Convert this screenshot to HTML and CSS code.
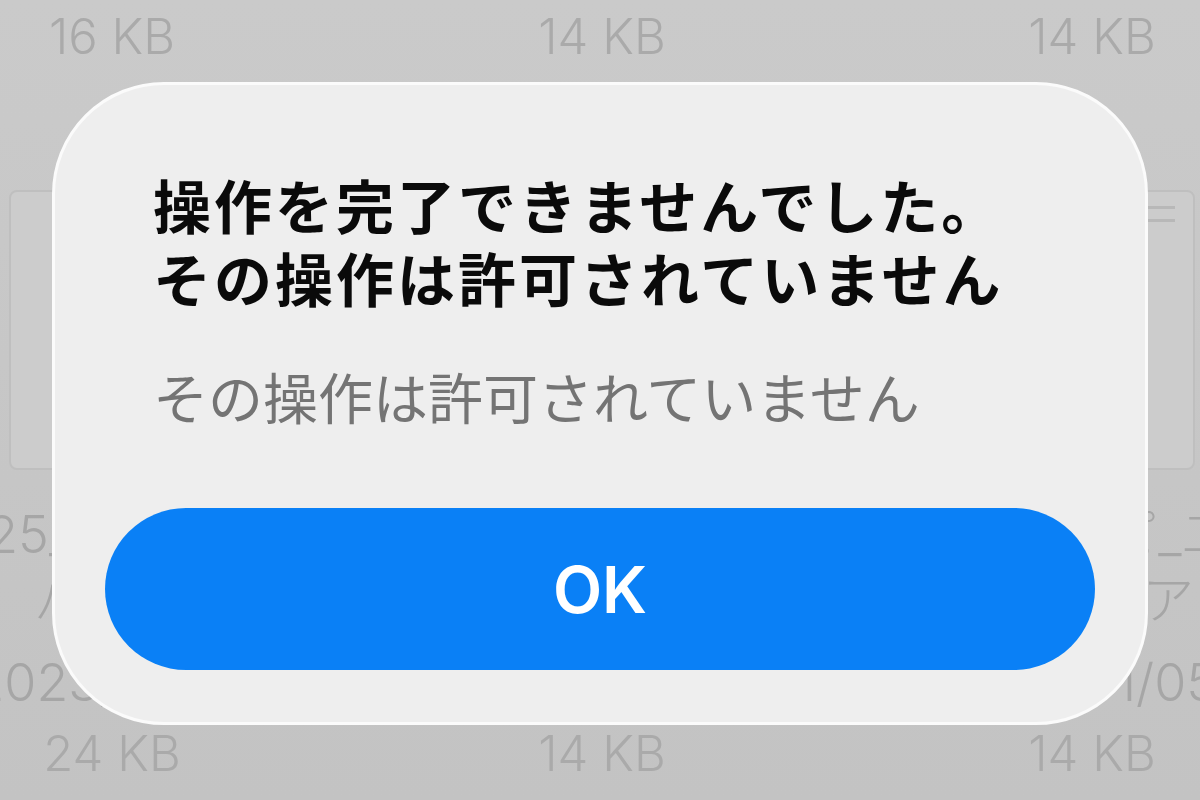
FILE: index.html
```html
<!DOCTYPE html>
<html lang="ja">
<head>
<meta charset="utf-8">
<link rel="stylesheet" href="styles.css">
</head>
<body>
<div class="screen">
  <div class="grid">
    <div class="col">
      <div class="size top">16 KB</div>
      <div class="thumb"><span class="doc-line"></span><span class="doc-line short"></span></div>
      <div class="name">IMG_2025_010512345678</div>
      <div class="name">バック</div>
      <div class="date">2023/05/01</div>
      <div class="size">24 KB</div>
    </div>
    <div class="col">
      <div class="size top">14 KB</div>
      <div class="thumb"><span class="doc-line"></span><span class="doc-line short"></span></div>
      <div class="name">IMG_2025_0105</div>
      <div class="name">スクリーンショット</div>
      <div class="date">2024/01/05</div>
      <div class="size">14 KB</div>
    </div>
    <div class="col">
      <div class="size top">14 KB</div>
      <div class="thumb"><span class="doc-line"></span><span class="doc-line short"></span></div>
      <div class="name">書類コピ_二</div>
      <div class="name">メディア</div>
      <div class="date">2024/01/05&nbsp;&nbsp;</div>
      <div class="size">14 KB</div>
    </div>
  </div>

  <div class="alert">
    <h1 class="title">操作を完了できませんでした。<br>その操作は許可されていません</h1>
    <p class="message">その操作は許可されていません</p>
    <button class="ok">OK</button>
  </div>
</div>
</body>
</html>
```

FILE: styles.css
```css
html, body {
  margin: 0;
  padding: 0;
}

body {
  width: 1200px;
  height: 800px;
  overflow: hidden;
  background: #c7c7c7;
  font-family: "Inter", "Noto Sans CJK JP", sans-serif;
}

.screen {
  position: relative;
  width: 1200px;
  height: 800px;
  overflow: hidden;
  background: linear-gradient(180deg, #cacaca 0%, #c6c6c6 60%, #c3c3c3 100%);
}

.grid {
  display: flex;
  width: 1470px;
  margin-left: -133px;
}

.col {
  flex: 0 0 490px;
  min-width: 0;
  width: 490px;
  display: flex;
  flex-direction: column;
  align-items: center;
}

.size {
  font-family: "Inter", sans-serif;
  font-size: 49px;
  font-weight: 300;
  color: #aaaaaa;
  line-height: 56px;
  height: 56px;
}

.size.top {
  margin-top: 9px;
  margin-bottom: 125px;
}

.thumb {
  width: 206px;
  height: 280px;
  box-sizing: border-box;
  border: 2px solid #bfbfbf;
  border-radius: 8px;
  background: #cccccc;
  margin-bottom: 32px;
  padding: 14px 18px;
  display: flex;
  flex-direction: column;
  align-items: flex-end;
  gap: 10px;
}

.doc-line {
  display: block;
  width: 60px;
  height: 3px;
  background: #b8b8b8;
}

.doc-line.short {
  width: 40px;
}

.name, .date {
  font-family: "Inter", "Noto Sans CJK JP", sans-serif;
  font-size: 52px;
  font-weight: 300;
  color: #a6a6a6;
  line-height: 66px;
  white-space: nowrap;
}

.date {
  margin-top: 16px;
  margin-bottom: 10px;
}

.alert {
  position: absolute;
  left: 52px;
  top: 82px;
  width: 1096px;
  height: 643px;
  box-sizing: border-box;
  background: #eeeeee;
  border: 3px solid #fbfbfb;
  border-radius: 112px;
  padding: 83px 50px 0 98px;
  display: flex;
  flex-direction: column;
}

.title {
  margin: 0;
  font-family: "Noto Sans CJK JP", sans-serif;
  font-weight: 700;
  font-size: 58px;
  letter-spacing: 3px;
  line-height: 73px;
  color: #0a0a0a;
}

.message {
  margin: 46px 0 0 0;
  font-family: "Noto Sans CJK JP", sans-serif;
  font-weight: 400;
  font-size: 55px;
  line-height: 70px;
  color: #747474;
}

.ok {
  margin: 78px 0 0 -48px;
  width: 990px;
  height: 162px;
  border: none;
  border-radius: 81px;
  background: #0a80f6;
  color: #ffffff;
  font-family: "Inter", sans-serif;
  font-weight: 600;
  font-size: 64px;
  padding: 0;
}
```
